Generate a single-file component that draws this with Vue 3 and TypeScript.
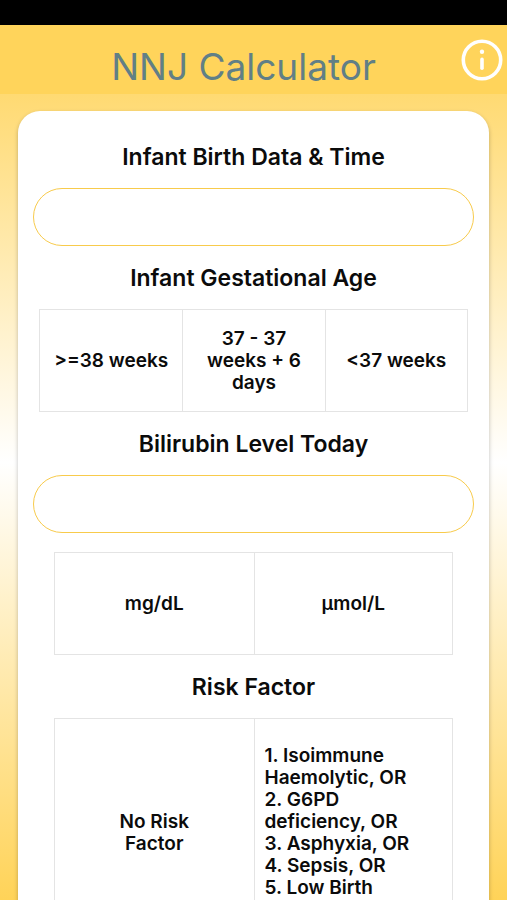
<script setup lang="ts">
import { ref } from 'vue'

const birth = ref('')
const bilirubin = ref('')
const age = ref<string | null>(null)
const unit = ref<string | null>(null)
const risk = ref<string | null>(null)

const ages: string[] = ['>=38 weeks', '37 - 37 weeks + 6 days', '<37 weeks']
const units: string[] = ['mg/dL', 'µmol/L']
const factors: string[] = [
  '1. Isoimmune Haemolytic, OR',
  '2. G6PD deficiency, OR',
  '3. Asphyxia, OR',
  '4. Sepsis, OR',
  '5. Low Birth',
]
</script>

<template>
  <div class="screen">
    <div class="status"></div>
    <div class="body">
      <header class="bar">
        <h1>NNJ Calculator</h1>
        <button class="info" type="button" aria-label="Information">
          <svg viewBox="0 0 42 42" width="42" height="42" fill="none" stroke="#fff" stroke-linecap="round">
            <circle cx="21" cy="21" r="18.7" stroke-width="3.6" />
            <path d="M21 20.4v8.8" stroke-width="3.6" />
            <circle cx="21" cy="12.8" r="2.2" fill="#fff" stroke="none" />
          </svg>
        </button>
      </header>

      <main class="card">
        <label class="heading" for="birth">Infant Birth Data &amp; Time</label>
        <input id="birth" v-model="birth" class="field" type="text" />

        <h2 id="age-title" class="heading">Infant Gestational Age</h2>
        <div class="options three" role="group" aria-labelledby="age-title">
          <button
            v-for="item in ages"
            :key="item"
            type="button"
            class="option"
            :class="{ on: age === item }"
            :aria-pressed="age === item"
            @click="age = item"
          >{{ item }}</button>
        </div>

        <label id="bilirubin-title" class="heading" for="bilirubin">Bilirubin Level Today</label>
        <input id="bilirubin" v-model="bilirubin" class="field" type="text" inputmode="decimal" />

        <div class="options two units" role="group" aria-labelledby="bilirubin-title">
          <button
            v-for="item in units"
            :key="item"
            type="button"
            class="option"
            :class="{ on: unit === item }"
            :aria-pressed="unit === item"
            @click="unit = item"
          >{{ item }}</button>
        </div>

        <h2 id="risk-title" class="heading">Risk Factor</h2>
        <div class="options two" role="group" aria-labelledby="risk-title">
          <button
            type="button"
            class="option none"
            :class="{ on: risk === 'none' }"
            :aria-pressed="risk === 'none'"
            @click="risk = 'none'"
          >No Risk Factor</button>
          <button
            type="button"
            class="option list"
            :class="{ on: risk === 'some' }"
            :aria-pressed="risk === 'some'"
            @click="risk = 'some'"
          >
            <span v-for="item in factors" :key="item" class="line">{{ item }}</span>
          </button>
        </div>
      </main>
    </div>
  </div>
</template>

<style>
body {
  background: #000;
}
</style>

<style scoped>
.screen {
  display: flex;
  flex-direction: column;
  height: 100vh;
  font-family: Inter, "Liberation Sans", sans-serif;
  color: #0b0b0b;
}

.status {
  flex: none;
  height: 25px;
  background: #000;
}

.body {
  flex: 1;
  min-height: 0;
  display: flex;
  flex-direction: column;
  overflow: hidden;
  background: linear-gradient(#ffd358, #fff 50%, #ffd358);
}

.bar {
  flex: none;
  display: grid;
  grid-template-columns: 26px 1fr 42px;
  align-items: center;
  height: 69px;
  padding: 0 4px 0 0;
  background: #ffd45b;
}

h1 {
  grid-column: 2;
  margin: 0;
  padding: 14px 0 0;
  font-size: 37px;
  line-height: 44px;
  font-weight: 400;
  text-align: center;
  color: #617f86;
}

.info {
  width: 42px;
  height: 42px;
  padding: 0;
  border: 0;
  background: none;
}

.info svg {
  display: block;
}

.card {
  flex: 1 0 auto;
  display: flex;
  flex-direction: column;
  box-sizing: border-box;
  margin: 17px 18px 0;
  padding: 30px 15px;
  border-radius: 22px 22px 0 0;
  background: #fff;
  box-shadow: 0 2px 4px rgba(0, 0, 0, 0.25);
}

.heading {
  margin: 0;
  font-size: 23px;
  line-height: 32px;
  font-weight: 600;
  text-align: center;
}

.field {
  box-sizing: border-box;
  width: 100%;
  height: 58px;
  margin: 15px 0 16px;
  padding: 0 24px;
  border: 1px solid #f8cb4c;
  border-radius: 29px;
  background: #fff;
  font: inherit;
  font-size: 19px;
  outline: none;
}

.options {
  display: grid;
  border: 1px solid #e4e4e4;
}

.three {
  grid-template-columns: repeat(3, 1fr);
  margin: 15px 6px 16px;
}

.two {
  grid-template-columns: repeat(2, 1fr);
  margin: 15px 21px 16px;
}

.units {
  margin-top: 3px;
}

.option {
  min-height: 101px;
  padding: 10px;
  border: 0;
  background: #fff;
  color: inherit;
  font-family: inherit;
  font-size: 19px;
  line-height: 22px;
  font-weight: 600;
  text-align: center;
}

.option + .option {
  border-left: 1px solid #e4e4e4;
}

.option.on {
  background: #ffd45b;
}

.none {
  padding: 10px 48px;
}

.list {
  padding: 26px 36px 48px 10px;
  text-align: left;
}

.line {
  display: block;
}
</style>
